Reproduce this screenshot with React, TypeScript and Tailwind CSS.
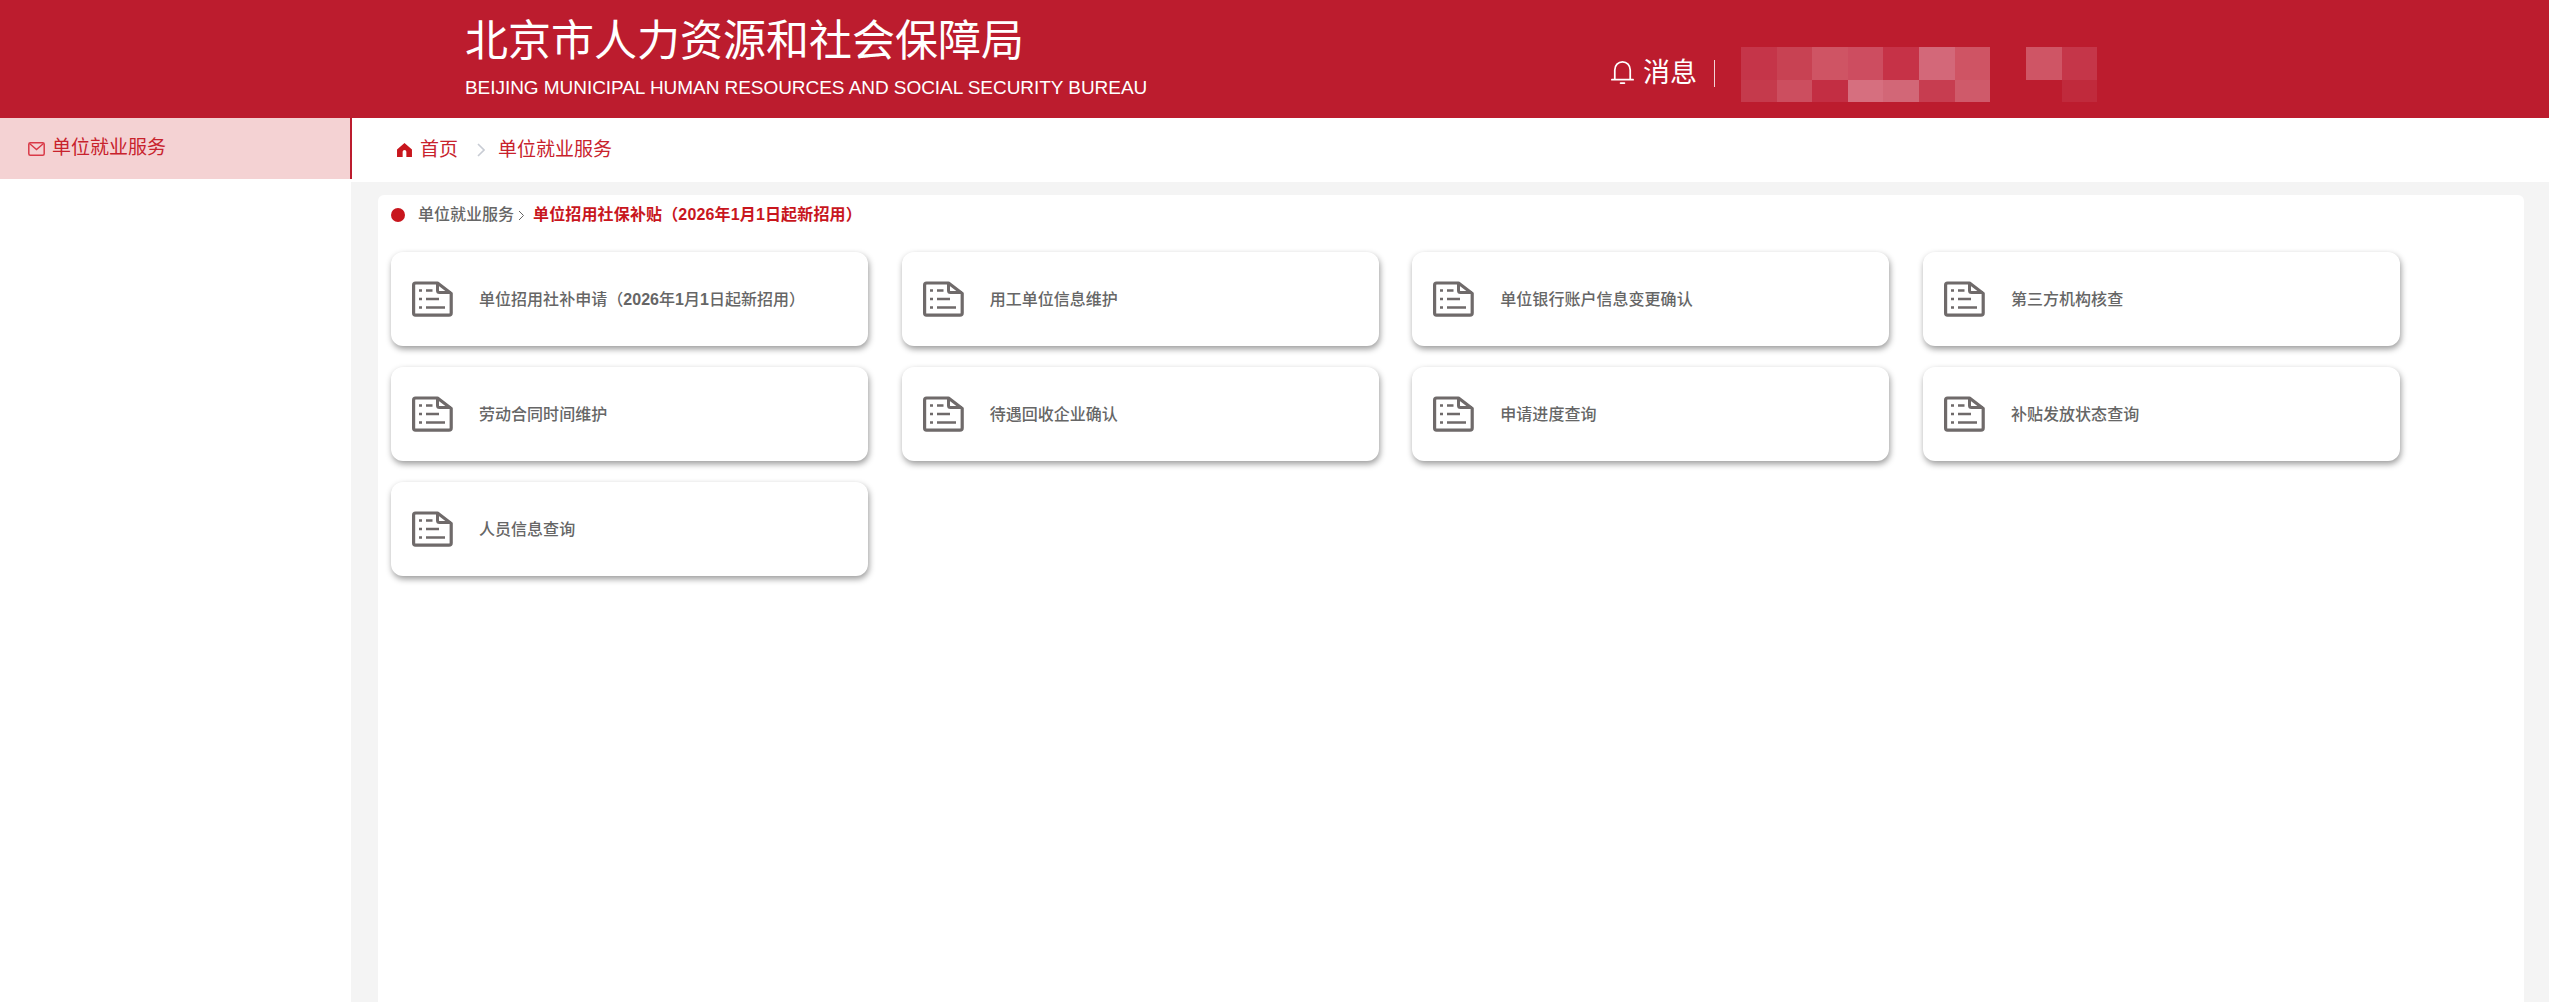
const cards = [
  "单位招用社补申请（2026年1月1日起新招用）",
  "用工单位信息维护",
  "单位银行账户信息变更确认",
  "第三方机构核查",
  "劳动合同时间维护",
  "待遇回收企业确认",
  "申请进度查询",
  "补贴发放状态查询",
  "人员信息查询",
];

// colours of the blurred account name in the header, row by row
const mosaicLeftTop = ["#c53549", "#c84253", "#cf5464", "#cd4d60", "#c63247", "#d36879", "#cf5464"];
const mosaicLeftBottom = ["#c53a4c", "#cc4e5f", "#c32e43", "#d66f7f", "#d26777", "#c73d50", "#cf5a6a"];
const mosaicRightTop = ["#cf5565", "#c53649"];
const mosaicRightBottom = ["#bc1c2e", "#c02a3c"];

function Mosaic({ top, bottom }: { top: string[]; bottom: string[] }) {
  return (
    <div className="flex flex-col">
      <div className="flex h-[33px]">
        {top.map((c, i) => (
          <div key={i} className="w-[35.6px]" style={{ background: c }} />
        ))}
      </div>
      <div className="flex h-[22px]">
        {bottom.map((c, i) => (
          <div key={i} className="w-[35.6px]" style={{ background: c }} />
        ))}
      </div>
    </div>
  );
}

function DocIcon() {
  return (
    <svg width="41" height="36" viewBox="0 0 41 36" fill="none" stroke="#6f6a6a" className="shrink-0">
      <path
        d="M3.5 2H25.5L39.2 12.5V32C39.2 33.2 38.2 34.2 37 34.2H3.5C2.3 34.2 1.6 33.2 1.6 32V4C1.6 2.8 2.3 2 3.5 2Z"
        strokeWidth="3.2"
        strokeLinejoin="round"
      />
      <path d="M25.5 2V9.5C25.5 10.7 26.3 11.5 27.5 11.5H39" strokeWidth="3" />
      <path d="M7 9.5H10M14 9.5H20.5M7 18H10M14 18H27M7 26.5H10M14 26.5H33" strokeWidth="2.6" />
    </svg>
  );
}

// digits in the labels sit in bold Arial, the Chinese around them is lighter
function Label({ text }: { text: string }) {
  return (
    <>
      {text.split(/(\d+)/).map((part, i) =>
        /\d/.test(part) ? (
          <span key={i} className="font-bold">
            {part}
          </span>
        ) : (
          part
        ),
      )}
    </>
  );
}

export default function App() {
  return (
    <div className="flex h-[1002px] flex-col overflow-hidden bg-white font-['Liberation_Sans','Noto_Sans_CJK_SC',sans-serif]">
      <header className="flex h-[118px] shrink-0 bg-[#bc1c2e] text-white">
        <div className="ml-[465px] w-[1145px] pt-[15px]">
          <div className="text-[43px] leading-[52px]">北京市人力资源和社会保障局</div>
          <div className="mt-[9px] text-[19px] leading-[24px] tracking-[-0.05px]">
            BEIJING MUNICIPAL HUMAN RESOURCES AND SOCIAL SECURITY BUREAU
          </div>
        </div>
        <div className="flex items-center pt-[30px]">
          <svg width="25" height="27" viewBox="0 0 24 28" fill="none" stroke="white" strokeWidth="1.8" className="-mt-[4px]">
            <path d="M1 21.5H23" strokeLinecap="round" />
            <path d="M4 21.5V11.5C4 6.5 7.5 3 12 3C16.5 3 20 6.5 20 11.5V21.5" />
            <path d="M10 25H14" strokeLinecap="round" />
          </svg>
          <span className="ml-[8px] -mt-[3px] text-[27px] leading-[30px]">消息</span>
          <div className="ml-[17px] -mt-[2px] h-[27px] w-px bg-white/80" />
          <div className="ml-[26px]">
            <Mosaic top={mosaicLeftTop} bottom={mosaicLeftBottom} />
          </div>
          <div className="ml-[36px]">
            <Mosaic top={mosaicRightTop} bottom={mosaicRightBottom} />
          </div>
        </div>
      </header>

      <div className="flex min-h-0 flex-1">
        <aside className="w-[351px] shrink-0">
          <div className="relative z-10 flex h-[61px] w-[352px] items-center border-r-2 border-[#bc1c2e] bg-[#f4d2d3] pl-[28px] text-[19px] text-[#c8222c]">
            <svg width="17" height="14" viewBox="0 0 17 14" fill="none" stroke="#d93a48" strokeWidth="1.5">
              <rect x="0.8" y="0.8" width="15.4" height="12.4" rx="1.5" />
              <path d="M1.5 1.5L8.5 7.5L15.5 1.5" />
            </svg>
            <span className="ml-[7px]">单位就业服务</span>
          </div>
        </aside>

        <main className="flex min-w-0 flex-1 flex-col bg-[#f4f4f4]">
          <div className="flex h-[64px] shrink-0 items-center bg-white pl-[46px] text-[19px] text-[#c8222c]">
            <svg width="15" height="14" viewBox="0 0 16 15" fill="#c8161d">
              <path d="M8 0L16 7V15H10V9.5C10 8.4 9.1 7.5 8 7.5C6.9 7.5 6 8.4 6 9.5V15H0V7Z" />
            </svg>
            <span className="ml-[8px]">首页</span>
            <svg width="8" height="14" viewBox="0 0 8 14" fill="none" stroke="#c8ccd4" strokeWidth="1.6" className="ml-[19px]">
              <path d="M1 1L7 7L1 13" />
            </svg>
            <span className="ml-[13px]">单位就业服务</span>
          </div>

          <div className="mt-[13px] ml-[27px] mr-[25px] flex-1 rounded-t-[6px] bg-white pl-[13px]">
            <div className="flex h-[38px] items-center pt-[2px] text-[16px] font-medium">
              <span className="h-[14px] w-[14px] rounded-full bg-[#c8161d]" />
              <span className="ml-[13px] text-[#666666]">单位就业服务</span>
              <svg width="7" height="11" viewBox="0 0 7 11" fill="none" stroke="#666666" className="ml-[4px]">
                <path d="M1 1L5.5 5.5L1 10" />
              </svg>
              <span className="ml-[8px] font-bold tracking-[0.15px] text-[#c8161d]">单位招用社保补贴（2026年1月1日起新招用）</span>
            </div>
            <div className="mt-[19px] grid grid-cols-[repeat(4,477px)] gap-x-[33.67px] gap-y-[21px]">
              {cards.map((title) => (
                <div
                  key={title}
                  className="flex h-[94px] items-center rounded-[12px] bg-white pl-[21px] shadow-[1px_3px_6px_rgba(0,0,0,0.4)]"
                >
                  <DocIcon />
                  <span className="ml-[26px] pt-[2px] text-[16px] font-medium tracking-[0.03px] text-[#666666]">
                    <Label text={title} />
                  </span>
                </div>
              ))}
            </div>
          </div>
        </main>
      </div>
    </div>
  );
}
